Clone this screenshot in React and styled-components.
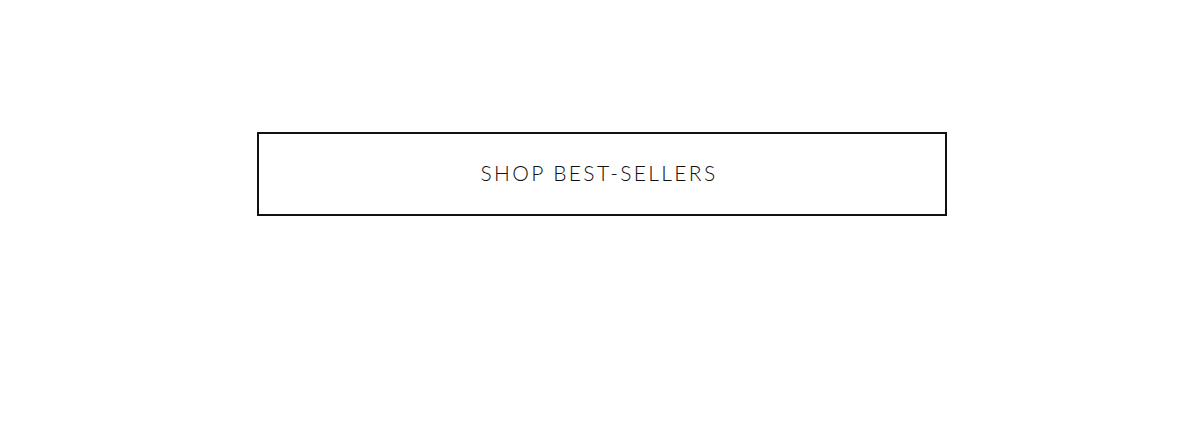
import React from "react";
import styled, { createGlobalStyle } from "styled-components";

const GlobalStyle = createGlobalStyle`
    body{
        margin: 0;
        background: #ffffff;
        font-family: "Lato", "Liberation Sans", sans-serif;
    }
`

const Page = styled.div`
    width: 1200px;
    height: 428px;
    box-sizing: border-box;
    padding: 132px 0 0 257px;
`

const ShopButton = styled.a`
    display: flex;
    align-items: center;
    justify-content: center;
    box-sizing: border-box;
    width: 690px;
    height: 84px;
    border: 2px solid #111111;
    color: #111111;
    text-decoration: none;
    font-size: 21px;
    font-weight: 300;
    letter-spacing: 2.35px;
    padding: 0 6px 3px 0;
    cursor: pointer;
`

export default function App() {
    return <>
        <GlobalStyle/>
        <Page>
            <ShopButton href="#">SHOP BEST-SELLERS</ShopButton>
        </Page>
    </>
}
